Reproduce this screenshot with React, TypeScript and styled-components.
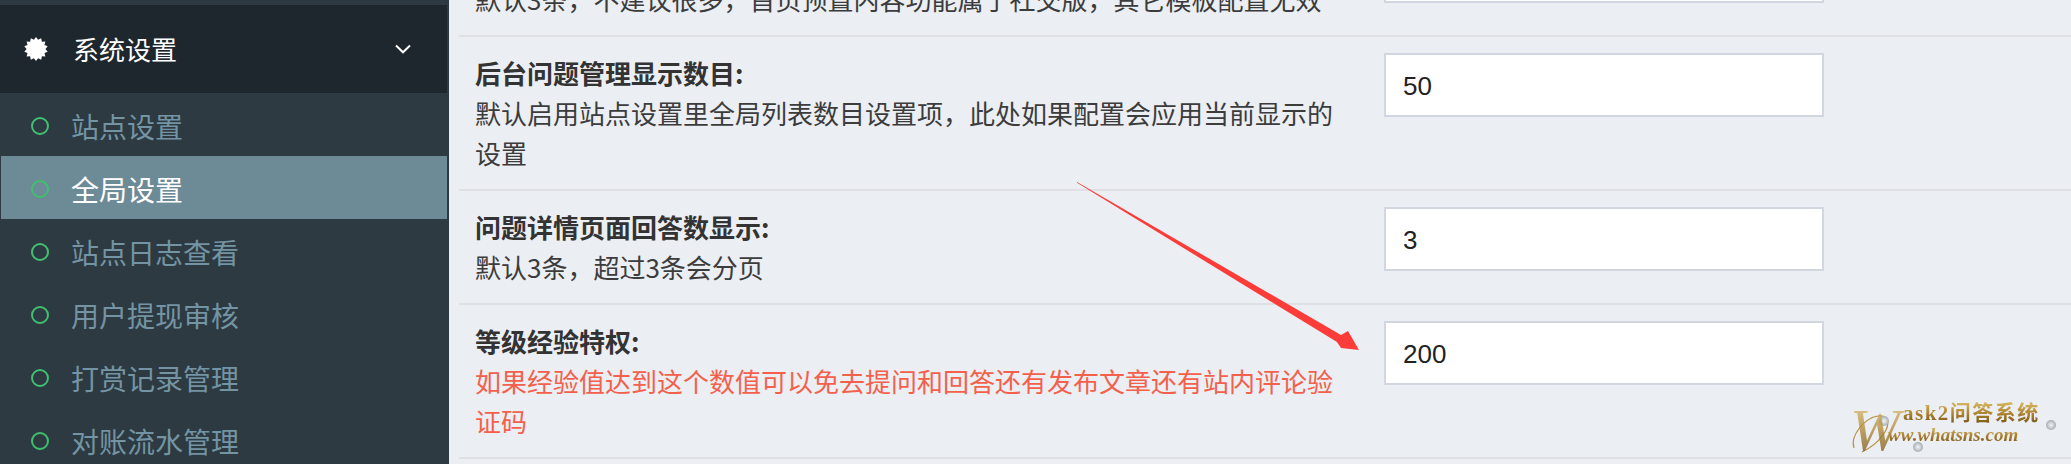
import styled, { createGlobalStyle } from "styled-components";

const GlobalStyle = createGlobalStyle`
  html, body {
    margin: 0;
    padding: 0;
    height: 100%;
    overflow: hidden;
    background: #ebeef3;
    font-family: "Noto Sans CJK SC", "Noto Sans", sans-serif;
  }
  * {
    box-sizing: border-box;
  }
`;

const Page = styled.div`
  position: relative;
  display: flex;
  width: 100%;
  height: 100vh;
  overflow: hidden;
`;

const Sidebar = styled.nav`
  flex: 0 0 449px;
  height: 100%;
  padding: 5px 2px 0 0;
  background: #2d3a42;
  overflow: hidden;
`;

const MenuHeader = styled.div`
  display: flex;
  align-items: center;
  height: 88px;
  padding: 0 36px 0 24px;
  background: #1f272e;
  color: #fff;
  font-size: 26px;
`;

const HeaderLabel = styled.span`
  flex: 1;
  margin-left: 25px;
  line-height: 40px;
`;

const MenuItem = styled.div<{ $active?: boolean }>`
  display: flex;
  align-items: center;
  height: 63px;
  margin-left: ${(p) => (p.$active ? "1px" : "0")};
  padding: 3px 0 0 ${(p) => (p.$active ? "30px" : "31px")};
  background: ${(p) => (p.$active ? "#6d8a97" : "transparent")};
  color: ${(p) => (p.$active ? "#fff" : "#7494a3")};
  font-size: 28px;
`;

const Dot = styled.i`
  flex: 0 0 18px;
  height: 18px;
  margin-right: 22px;
  border: 2.4px solid #3fc06f;
  border-radius: 50%;
`;

const Main = styled.main`
  flex: 1;
  display: flex;
  flex-direction: column;
  justify-content: flex-end;
  height: 100%;
  padding: 0 0 5px 10px;
  overflow: hidden;
`;

const Row = styled.section`
  flex: none;
  display: grid;
  grid-template-columns: 879px 440px;
  column-gap: 30px;
  align-items: start;
  padding: 16px 0 16px 16px;
  border-bottom: 2px solid #dfe0e4;
`;

const Title = styled.div`
  font-size: 26px;
  line-height: 40px;
  font-weight: 700;
  color: #333;
`;

const Desc = styled.div<{ $warn?: boolean }>`
  font-size: 26px;
  line-height: 40px;
  color: ${(p) => (p.$warn ? "#f4604b" : "#3c3c3c")};
`;

const Field = styled.input`
  display: block;
  width: 440px;
  height: 64px;
  padding: 2px 17px 0;
  border: 2px solid #d2d6e0;
  border-radius: 0;
  outline: none;
  background: #fff;
  color: #222;
  font-family: "Liberation Sans", sans-serif;
  font-size: 26px;
`;

const Arrow = styled.svg`
  position: absolute;
  left: 1070px;
  top: 176px;
  width: 300px;
  height: 180px;
`;

const Watermark = styled.div`
  position: absolute;
  left: 1850px;
  top: 398px;
  width: 215px;
  height: 60px;
`;

const WatermarkArt = styled.svg`
  position: absolute;
  inset: 0;
  width: 100%;
  height: 100%;
`;

const gold = `
  background: linear-gradient(180deg, #e2c26a 0%, #a97f2c 55%, #6d4f17 100%);
  -webkit-background-clip: text;
  background-clip: text;
  color: transparent;
`;

const BigLetter = styled.span`
  position: absolute;
  left: 0;
  top: 4px;
  padding-right: 8px;
  font-family: "Liberation Serif", serif;
  font-style: italic;
  font-size: 60px;
  line-height: 56px;
  opacity: 0.75;
  ${gold}
`;

const BrandLine = styled.span`
  position: absolute;
  left: 53px;
  top: 2px;
  white-space: nowrap;
  font-family: "Liberation Serif", "Noto Sans CJK SC", serif;
  font-weight: 700;
  font-size: 21px;
  line-height: 26px;
  letter-spacing: 1.5px;
  ${gold}
`;

const SiteLine = styled.span`
  position: absolute;
  left: 38px;
  top: 27px;
  white-space: nowrap;
  font-family: "Liberation Serif", serif;
  font-style: italic;
  font-weight: 700;
  font-size: 19px;
  line-height: 20px;
  ${gold}
`;

const Burst = () => {
  const points: string[] = [];
  for (let i = 0; i < 28; i++) {
    const r = i % 2 ? 12 : 9.4;
    const a = (i / 28) * Math.PI * 2;
    points.push(`${12 + r * Math.cos(a)},${12 + r * Math.sin(a)}`);
  }
  return (
    <svg width="24" height="24" viewBox="0 0 24 24" style={{ flex: "none" }}>
      <polygon points={points.join(" ")} fill="#fff" />
    </svg>
  );
};

const Chevron = () => (
  <svg width="16" height="10" viewBox="0 0 16 10" fill="none">
    <path d="M1 1.5 L8 8.3 L15 1.5" stroke="#fff" strokeWidth="2" />
  </svg>
);

const items = ["站点设置", "全局设置", "站点日志查看", "用户提现审核", "打赏记录管理", "对账流水管理"];

const rows = [
  { title: "首页问题显示数目:", desc: "默认3条，不建议很多，首页预置内容功能属于社交版，其它模板配置无效", value: "3" },
  {
    title: "后台问题管理显示数目:",
    desc: "默认启用站点设置里全局列表数目设置项，此处如果配置会应用当前显示的设置",
    value: "50",
  },
  { title: "问题详情页面回答数显示:", desc: "默认3条，超过3条会分页", value: "3" },
  {
    title: "等级经验特权:",
    desc: "如果经验值达到这个数值可以免去提问和回答还有发布文章还有站内评论验证码",
    value: "200",
    warn: true,
  },
];

const App = () => {
  return (
    <Page>
      <GlobalStyle />
      <Sidebar>
        <MenuHeader>
          <Burst />
          <HeaderLabel>系统设置</HeaderLabel>
          <Chevron />
        </MenuHeader>
        {items.map((item) => (
          <MenuItem key={item} $active={item === "全局设置"}>
            <Dot />
            {item}
          </MenuItem>
        ))}
      </Sidebar>
      <Main>
        {rows.map((row) => (
          <Row key={row.title}>
            <div>
              <Title>{row.title}</Title>
              <Desc $warn={row.warn}>{row.desc}</Desc>
            </div>
            <Field defaultValue={row.value} />
          </Row>
        ))}
      </Main>
      <Arrow viewBox="0 0 300 180">
        <polygon points="7,6 271,159 278,155 289,174 271,172 267,166 7,6.8" fill="#fb3c38" />
      </Arrow>
      <Watermark>
        <WatermarkArt viewBox="0 0 215 60" fill="none">
          <defs>
            <radialGradient id="gem">
              <stop offset="0" stopColor="#f4f6f7" />
              <stop offset="1" stopColor="#a6adb2" />
            </radialGradient>
          </defs>
          <path
            d="M4 50 C 0 38, 14 20, 28 18 C 38 17, 42 26, 32 38 C 28 44, 20 50, 12 54"
            stroke="#b58f3c"
            strokeWidth="1.2"
          />
          <circle cx="34" cy="23" r="5" fill="url(#gem)" />
          <circle cx="201" cy="27" r="5" fill="url(#gem)" />
          <circle cx="68" cy="49" r="5" fill="url(#gem)" />
        </WatermarkArt>
        <BigLetter>W</BigLetter>
        <BrandLine>ask2问答系统</BrandLine>
        <SiteLine>ww.whatsns.com</SiteLine>
      </Watermark>
    </Page>
  );
};

export default App;
